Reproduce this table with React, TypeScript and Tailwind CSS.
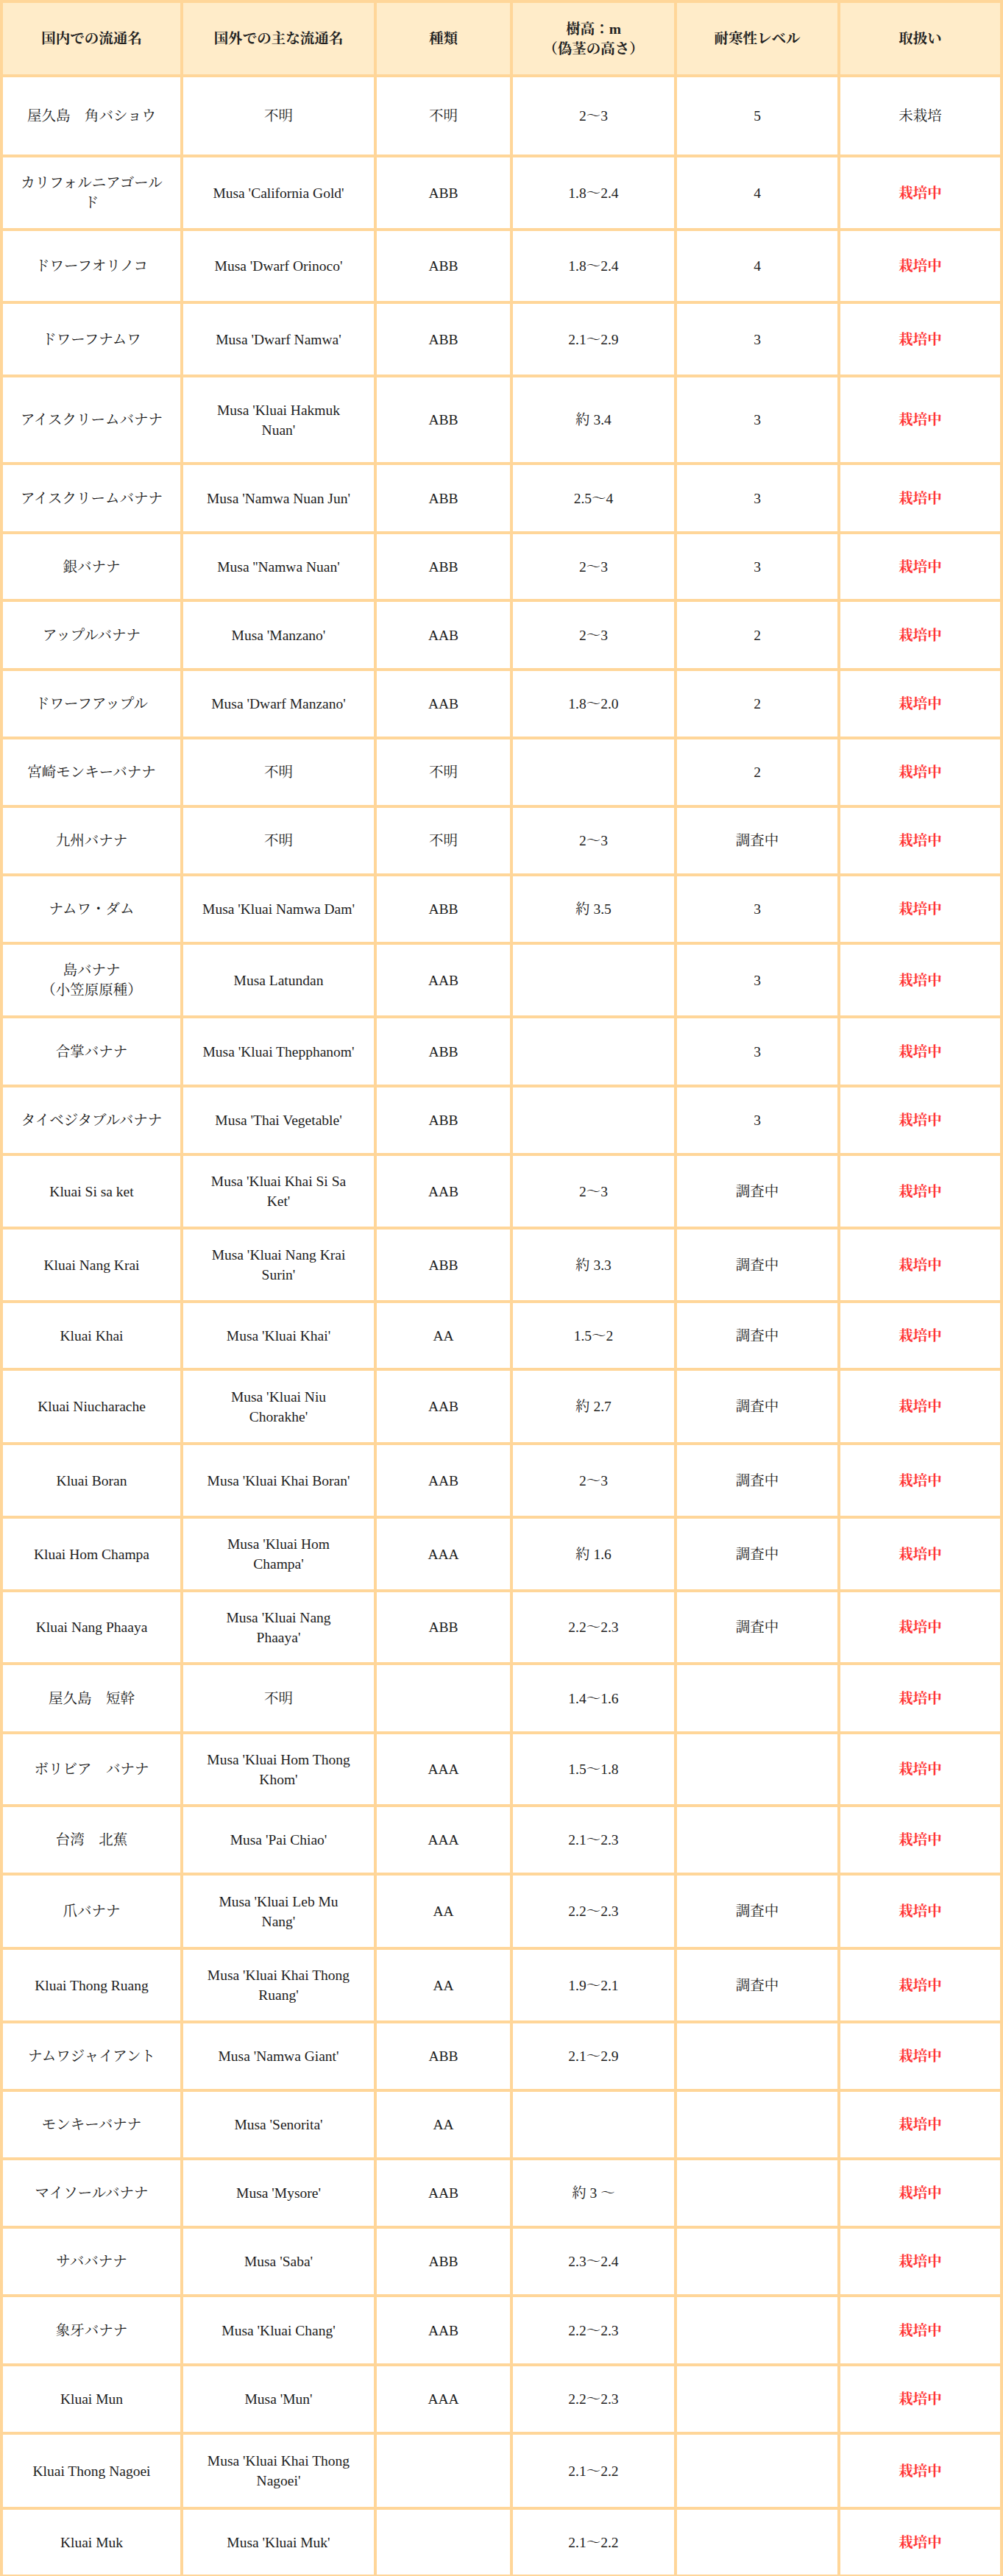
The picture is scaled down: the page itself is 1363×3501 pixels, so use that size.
const headers = [
    '国内での流通名',
    '国外での主な流通名',
    '種類',
    '樹高：m\n（偽茎の高さ）',
    '耐寒性レベル',
    '取扱い',
];

// name, overseas name, type, height, hardiness, status, row height class
const rows: [string, string, string, string, string, string, string][] = [
    ['屋久島　角バショウ', '不明', '不明', '2〜3', '5', '未栽培', 'h-[109px]'],
    ['カリフォルニアゴール\nド', "Musa 'California Gold'", 'ABB', '1.8〜2.4', '4', '栽培中', 'h-[100px]'],
    ['ドワーフオリノコ', "Musa 'Dwarf Orinoco'", 'ABB', '1.8〜2.4', '4', '栽培中', 'h-[99px]'],
    ['ドワーフナムワ', "Musa 'Dwarf Namwa'", 'ABB', '2.1〜2.9', '3', '栽培中', 'h-[100px]'],
    ['アイスクリームバナナ', "Musa 'Kluai Hakmuk\nNuan'", 'ABB', '約 3.4', '3', '栽培中', 'h-[119px]'],
    ['アイスクリームバナナ', "Musa 'Namwa Nuan Jun'", 'ABB', '2.5〜4', '3', '栽培中', 'h-[94px]'],
    ['銀バナナ', "Musa ''Namwa Nuan'", 'ABB', '2〜3', '3', '栽培中', 'h-[92px]'],
    ['アップルバナナ', "Musa 'Manzano'", 'AAB', '2〜3', '2', '栽培中', 'h-[94px]'],
    ['ドワーフアップル', "Musa 'Dwarf Manzano'", 'AAB', '1.8〜2.0', '2', '栽培中', 'h-[93px]'],
    ['宮崎モンキーバナナ', '不明', '不明', '', '2', '栽培中', 'h-[93px]'],
    ['九州バナナ', '不明', '不明', '2〜3', '調査中', '栽培中', 'h-[93px]'],
    ['ナムワ・ダム', "Musa 'Kluai Namwa Dam'", 'ABB', '約 3.5', '3', '栽培中', 'h-[93px]'],
    ['島バナナ\n（小笠原原種）', 'Musa Latundan', 'AAB', '', '3', '栽培中', 'h-[100px]'],
    ['合掌バナナ', "Musa 'Kluai Thepphanom'", 'ABB', '', '3', '栽培中', 'h-[94px]'],
    ['タイベジタブルバナナ', "Musa 'Thai Vegetable'", 'ABB', '', '3', '栽培中', 'h-[93px]'],
    ['Kluai Si sa ket', "Musa  'Kluai Khai Si Sa\nKet'", 'AAB', '2〜3', '調査中', '栽培中', 'h-[100px]'],
    ['Kluai Nang Krai', "Musa 'Kluai Nang Krai\nSurin'", 'ABB', '約 3.3', '調査中', '栽培中', 'h-[100px]'],
    ['Kluai Khai', "Musa 'Kluai Khai'", 'AA', '1.5〜2', '調査中', '栽培中', 'h-[92px]'],
    ['Kluai Niucharache', "Musa 'Kluai Niu\nChorakhe'", 'AAB', '約 2.7', '調査中', '栽培中', 'h-[101px]'],
    ['Kluai Boran', "Musa 'Kluai Khai Boran'", 'AAB', '2〜3', '調査中', '栽培中', 'h-[100px]'],
    ['Kluai Hom Champa', "Musa 'Kluai Hom\nChampa'", 'AAA', '約 1.6', '調査中', '栽培中', 'h-[100px]'],
    ['Kluai Nang Phaaya', "Musa  'Kluai Nang\nPhaaya'", 'ABB', '2.2〜2.3', '調査中', '栽培中', 'h-[99px]'],
    ['屋久島　短幹', '不明', '', '1.4〜1.6', '', '栽培中', 'h-[94px]'],
    ['ボリビア　バナナ', "Musa 'Kluai Hom Thong\nKhom'", 'AAA', '1.5〜1.8', '', '栽培中', 'h-[99px]'],
    ['台湾　北蕉', "Musa 'Pai Chiao'", 'AAA', '2.1〜2.3', '', '栽培中', 'h-[93px]'],
    ['爪バナナ', "Musa 'Kluai Leb Mu\nNang'", 'AA', '2.2〜2.3', '調査中', '栽培中', 'h-[101px]'],
    ['Kluai Thong Ruang', "Musa 'Kluai Khai Thong\nRuang'", 'AA', '1.9〜2.1', '調査中', '栽培中', 'h-[100px]'],
    ['ナムワジャイアント', "Musa 'Namwa Giant'", 'ABB', '2.1〜2.9', '', '栽培中', 'h-[93px]'],
    ['モンキーバナナ', "Musa 'Senorita'", 'AA', '', '', '栽培中', 'h-[93px]'],
    ['マイソールバナナ', "Musa 'Mysore'", 'AAB', '約 3 〜', '', '栽培中', 'h-[93px]'],
    ['サババナナ', "Musa 'Saba'", 'ABB', '2.3〜2.4', '', '栽培中', 'h-[93px]'],
    ['象牙バナナ', "Musa 'Kluai Chang'", 'AAB', '2.2〜2.3', '', '栽培中', 'h-[94px]'],
    ['Kluai Mun', "Musa 'Mun'", 'AAA', '2.2〜2.3', '', '栽培中', 'h-[93px]'],
    ['Kluai Thong Nagoei', "Musa 'Kluai Khai Thong\nNagoei'", '', '2.1〜2.2', '', '栽培中', 'h-[102px]'],
    ['Kluai Muk', "Musa 'Kluai Muk'", '', '2.1〜2.2', '', '栽培中', 'h-[92px]'],
];

const cell = 'border-4 border-[#ffd699] px-5 text-center align-middle whitespace-pre-line';

const App = () => {
    return (
        <div className="w-[1363px] bg-white text-[19.5px] leading-[27px] text-[#1c1c1c] font-['Liberation_Serif','Noto_Serif_CJK_JP','Noto_Sans_CJK_JP',serif]">
            <table className="w-full table-fixed border-collapse">
                <colgroup>
                    <col className="w-[245px]" />
                    <col className="w-[263px]" />
                    <col className="w-[185px]" />
                    <col className="w-[223px]" />
                    <col className="w-[222px]" />
                    <col />
                </colgroup>
                <thead>
                    <tr className="h-[101px] bg-[#ffecc9]">
                        {headers.map((h) => (
                            <th key={h} className={`${cell} font-bold text-[#222]`}>
                                {h}
                            </th>
                        ))}
                    </tr>
                </thead>
                <tbody>
                    {rows.map((r, i) => (
                        <tr key={i} className={r[6]}>
                            <td className={cell}>{r[0]}</td>
                            <td className={cell}>{r[1]}</td>
                            <td className={cell}>{r[2]}</td>
                            <td className={cell}>{r[3]}</td>
                            <td className={cell}>{r[4]}</td>
                            <td className={cell}>
                                {r[5] === '栽培中' ? (
                                    <span className="font-bold text-[#ff3535]">{r[5]}</span>
                                ) : (
                                    r[5]
                                )}
                            </td>
                        </tr>
                    ))}
                </tbody>
            </table>
        </div>
    );
};

export default App;
